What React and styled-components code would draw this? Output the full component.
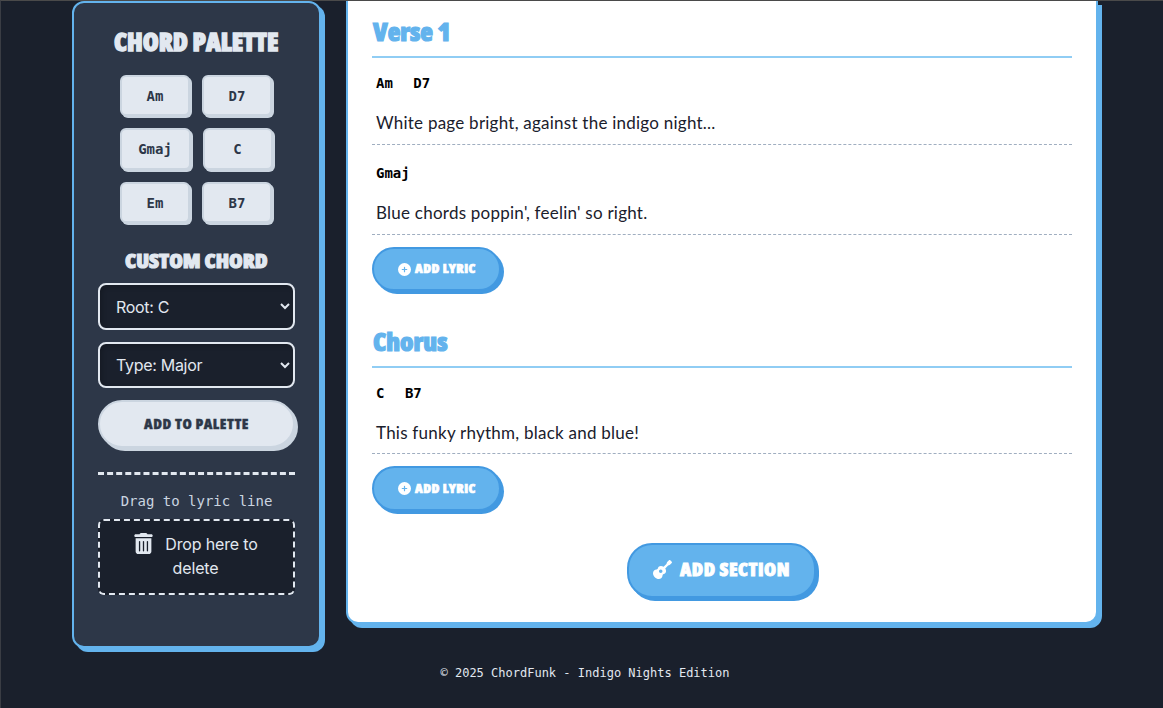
import React from "react";
import styled, { createGlobalStyle } from "styled-components";
import { FaCirclePlus, FaGuitar, FaTrashCan } from "react-icons/fa6";

const display = '"Open Sans", "Noto Sans", sans-serif';
const mono = '"DejaVu Sans Mono", "Liberation Mono", monospace';
const sans = 'Inter, "Liberation Sans", sans-serif';
const lyricFont = 'Lato, "Liberation Sans", sans-serif';

const GlobalStyle = createGlobalStyle`
  * { box-sizing: border-box; }
  body { margin: 0; background: #1a202c; font-family: ${sans}; }
`;

const Page = styled.div`
  height: 708px;
  overflow: hidden;
  border-top: 1px solid #4a4a4a;
  border-left: 1px solid #3a3d44;
  background: #1a202c;
`;

const Columns = styled.div`
  display: flex;
  align-items: flex-start;
  gap: 25px;
  padding-left: 71px;
`;

const Sidebar = styled.aside`
  width: 249px;
  height: 647px;
  padding: 20px 24px;
  border: 2px solid #63b3ed;
  border-radius: 12px;
  background: #2d3748;
  box-shadow: 4px 4px 0 #63b3ed;
  display: flex;
  flex-direction: column;
  align-items: center;
`;

const Display = styled.span`
  display: inline-block;
  font-family: ${display};
  font-weight: 800;
  font-stretch: 75%;
  font-size: ${(p) => p.$size}px;
  letter-spacing: ${(p) => p.$track || 0}px;
  -webkit-text-stroke: ${(p) => p.$stroke || 0}px currentColor;
  line-height: 1;
  white-space: nowrap;
  transform: scaleX(${(p) => p.$widen || 1});
  transform-origin: left;
  margin-right: ${(p) => p.$extra || 0}px;
`;

const PanelTitle = styled.h2`
  margin: 0;
  height: ${(p) => p.$height}px;
  display: flex;
  align-items: center;
  color: #e2e8f0;
`;

const ChordGrid = styled.div`
  width: 197px;
  margin: 14px 0 16px;
  padding-right: 1px;
  display: flex;
  flex-wrap: wrap;
  justify-content: center;
  gap: 12px;
`;

const ChordKey = styled.button`
  width: ${(p) => (p.$wide ? 71 : 70)}px;
  height: 41.45px;
  padding: 0;
  border: 2px solid #cbd5e0;
  border-radius: 6px;
  background: #e2e8f0;
  box-shadow: 2px 2px 0 #cbd5e0;
  color: #2d3748;
  font: 700 14px ${mono};
`;

const Select = styled.select`
  width: 197px;
  height: ${(p) => p.$height}px;
  margin: 0 0 12px;
  padding: 0 12px;
  border: 2px solid #e2e8f0;
  border-radius: 8px;
  background: #1a202c;
  color: #e2e8f0;
  box-shadow: inset 2px 2px 5px rgba(0, 0, 0, 0.2);
  font: 400 16px ${sans};
  letter-spacing: -0.3px;
`;

const Button = styled.button`
  display: flex;
  align-items: center;
  justify-content: center;
  gap: ${(p) => p.$gap || 0}px;
  width: ${(p) => p.$width}px;
  height: ${(p) => p.$height}px;
  padding: 0 0 ${(p) => p.$lift || 0}px;
  flex: none;
  border: 2px solid ${(p) => (p.$light ? "#cbd5e0" : "#4299e1")};
  border-radius: 25px;
  background: ${(p) => (p.$light ? "#e2e8f0" : "#63b3ed")};
  box-shadow: 3px 3px 0 ${(p) => (p.$light ? "#cbd5e0" : "#4299e1")};
  color: ${(p) => (p.$light ? "#2d3748" : "#fff")};
`;

const DashedRule = styled.hr`
  width: 197px;
  margin: 24px 0 16px;
  border: 0;
  border-top: 3px dashed #e2e8f0;
`;

const Hint = styled.p`
  margin: 0;
  height: 28px;
  color: #cbd5e0;
  font: 14px/20px ${mono};
`;

const DropZone = styled.div`
  width: 197px;
  height: 76px;
  padding: 11px 21px 11px 19px;
  border: 2px dashed #e2e8f0;
  border-radius: 6px;
  background: #1a202c;
  color: #e2e8f0;
  text-align: center;
  font-size: 16px;
  line-height: 24px;
  letter-spacing: -0.15px;
  svg { margin-right: 11px; vertical-align: -4px; }
`;

const Sheet = styled.main`
  width: 752px;
  height: 623px;
  padding: 0 24px;
  border: 2px solid #63b3ed;
  border-top: 0;
  border-radius: 0 0 12px 12px;
  background: #fff;
  box-shadow: 4px 4px 0 #63b3ed;
`;

const Section = styled.section`
  margin-bottom: ${(p) => p.$after}px;
`;

const SectionTitle = styled.h3`
  margin: 0 0 9px;
  height: ${(p) => p.$height}px;
  display: flex;
  align-items: flex-end;
  padding: 0 0 12px 1px;
  border-bottom: 2px solid #90cdf4;
  color: #63b3ed;
`;

const Line = styled.div`
  height: ${(p) => p.$height}px;
  margin-bottom: 12px;
  padding: 7px 4px 0;
  border-bottom: 1px dashed #a0aec0;
`;

const Chords = styled.div`
  display: flex;
  gap: 20.5px;
  height: 36px;
  color: #000;
  font: 700 14px/18px ${mono};
`;

const Lyric = styled.div`
  color: #1a202c;
  font: 400 17px/26px ${lyricFont};
  letter-spacing: 0.24px;
  white-space: nowrap;
`;

const Center = styled.div`
  display: flex;
  justify-content: center;
  padding-right: 1px;
`;

const Footer = styled.footer`
  padding-left: 6px;
  margin-top: 16px;
  text-align: center;
  color: #e2e8f0;
  font: 12px/18px ${mono};
`;

const palette = ["Am", "D7", "Gmaj", "C", "Em", "B7"];

function AddLyric({ height }) {
  return (
    <Button $width={129} $height={height} $gap={4}>
      <FaCirclePlus size={13} />
      <Display $size={12} $widen={1.12} $extra={6} $track={0.4} $stroke={0.7}>ADD LYRIC</Display>
    </Button>
  );
}

export default function App() {
  return (
    <Page>
      <GlobalStyle />
      <Columns>
        <Sidebar>
          <PanelTitle $height={38}>
            <Display $size={24} $widen={1.075} $extra={12} $stroke={1.3}>CHORD PALETTE</Display>
          </PanelTitle>
          <ChordGrid>
            {palette.map((name) => (
              <ChordKey key={name} $wide={name === "Gmaj"}>{name}</ChordKey>
            ))}
          </ChordGrid>
          <PanelTitle $height={44}>
            <Display $size={20} $widen={1.1} $extra={13} $stroke={1.1}>CUSTOM CHORD</Display>
          </PanelTitle>
          <Select $height={47}><option>Root: C</option></Select>
          <Select $height={46}><option>Type: Major</option></Select>
          <Button $light $width={197} $height={48}>
            <Display $size={14} $widen={1.07} $extra={7} $track={0.5} $stroke={0.4}>ADD TO PALETTE</Display>
          </Button>
          <DashedRule />
          <Hint>Drag to lyric line</Hint>
          <DropZone><FaTrashCan size={21} />Drop here to delete</DropZone>
        </Sidebar>
        <Sheet>
          <Section $after={28}>
            <SectionTitle $height={57}>
              <Display $size={25} $widen={1.045} $stroke={1.2}>Verse 1</Display>
            </SectionTitle>
            <Line $height={78}>
              <Chords><span>Am</span><span>D7</span></Chords>
              <Lyric>White page bright, against the indigo night...</Lyric>
            </Line>
            <Line $height={78}>
              <Chords><span>Gmaj</span></Chords>
              <Lyric>Blue chords poppin', feelin' so right.</Lyric>
            </Line>
            <AddLyric height={44} />
          </Section>
          <Section $after={32}>
            <SectionTitle $height={49}>
              <Display $size={25} $widen={1.045} $stroke={1.2}>Chorus</Display>
            </SectionTitle>
            <Line $height={77}>
              <Chords><span>C</span><span>B7</span></Chords>
              <Lyric>This funky rhythm, black and blue!</Lyric>
            </Line>
            <AddLyric height={45} />
          </Section>
          <Center>
            <Button $width={189} $height={55} $gap={8} $lift={3}>
              <FaGuitar size={19} />
              <Display $size={18} $widen={1.08} $extra={8} $track={0.5} $stroke={0.9}>ADD SECTION</Display>
            </Button>
          </Center>
        </Sheet>
      </Columns>
      <Footer>© 2025 ChordFunk - Indigo Nights Edition</Footer>
    </Page>
  );
}
